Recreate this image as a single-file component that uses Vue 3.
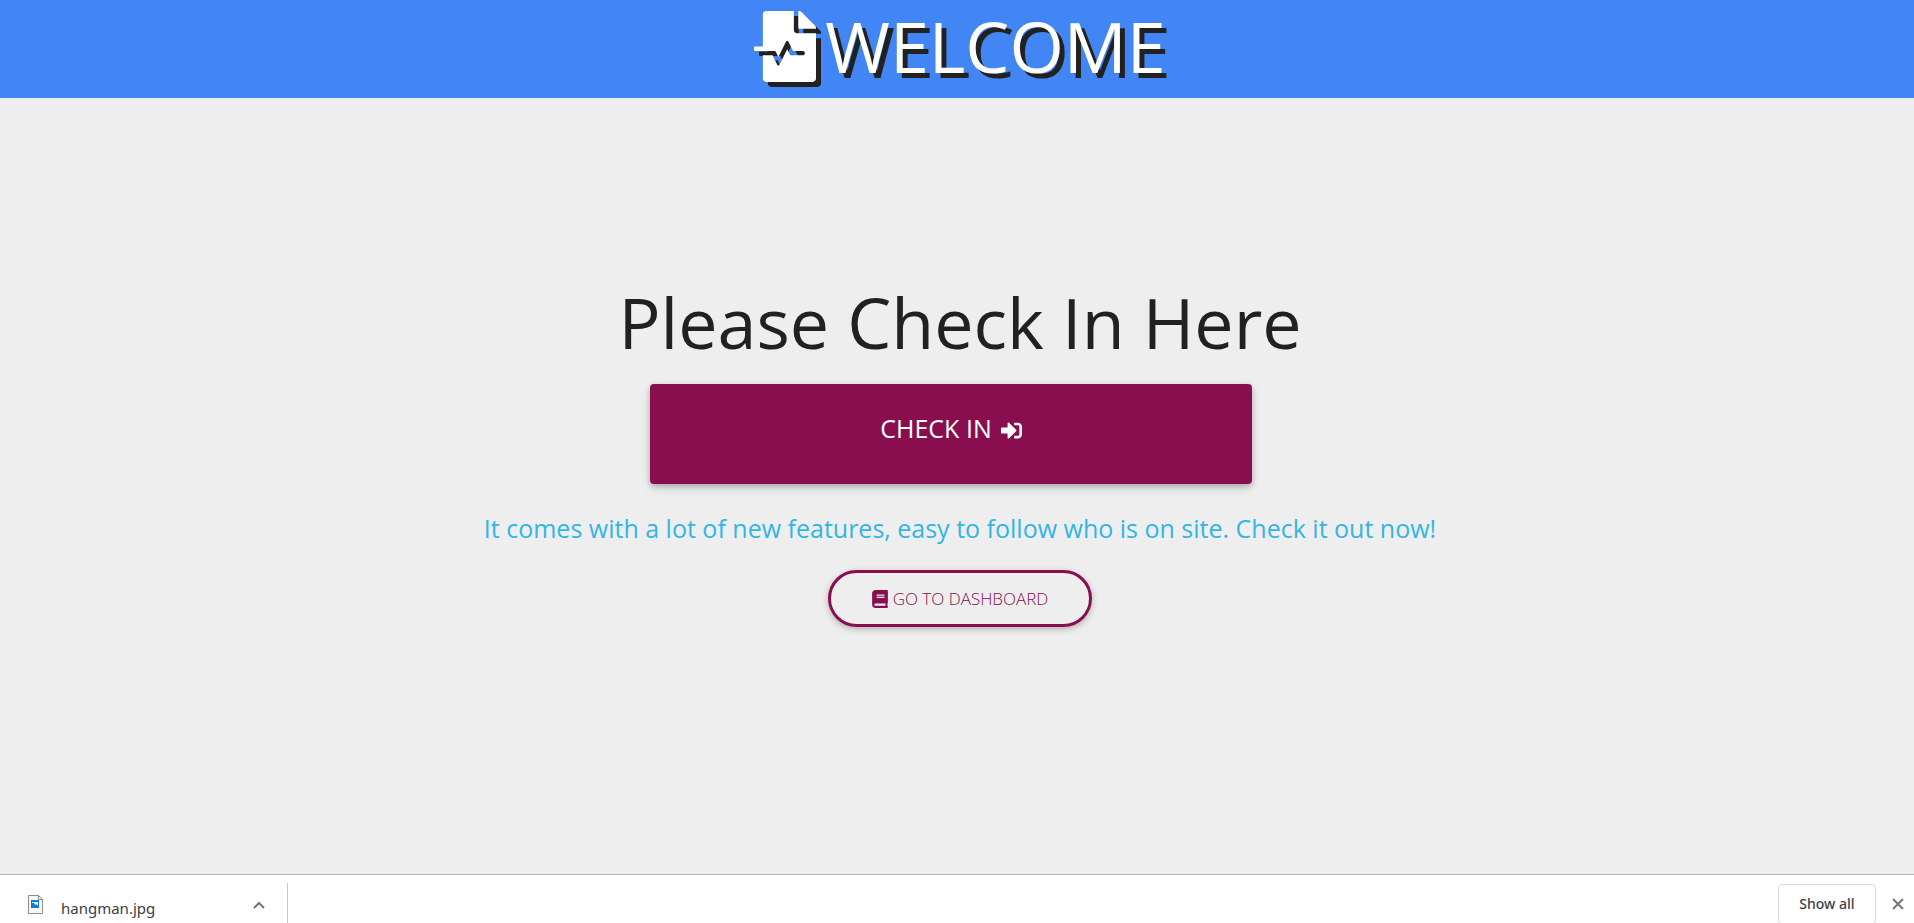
<script setup>
</script>

<template>
  <div class="page">
    <header class="banner">
      <h1 class="brand">
        <svg class="brand-icon" viewBox="0 0 448 512" aria-hidden="true">
          <path d="M288 136V0H88C74.700 0 64 10.700 64 24v232H8c-4.400 0-8 3.600-8 8v16c0 4.400 3.600 8 8 8h140.900c3 0 5.800 1.700 7.200 4.400l19.900 39.800 56.800-113.700c2.900-5.900 11.400-5.900 14.300 0l34.700 69.500H352c8.800 0 16 7.200 16 16s-7.200 16-16 16h-89.900L240 275.800l-56.800 113.700c-2.900 5.900-11.400 5.900-14.300 0L134.100 320H64v168c0 13.300 10.700 24 24 24h336c13.300 0 24-10.700 24-24V160H312c-13.200 0-24-10.800-24-24zm153-31L343.100 7c-4.500-4.500-10.600-7-17-7H320v128h128v-6.100c0-6.300-2.500-12.400-7-16.900z" />
        </svg>
        <span>WELCOME</span>
      </h1>
    </header>

    <main class="content">
      <h2 class="title">Please Check In Here</h2>
      <button class="check-in" type="button">
        <span>CHECK IN</span>
        <svg class="sign-icon" viewBox="0 0 512 512" aria-hidden="true">
          <path d="M416 448h-84c-6.600 0-12-5.400-12-12v-40c0-6.600 5.400-12 12-12h84c17.700 0 32-14.300 32-32V160c0-17.700-14.300-32-32-32h-84c-6.600 0-12-5.400-12-12V76c0-6.600 5.400-12 12-12h84c53 0 96 43 96 96v192c0 53-43 96-96 96zm-47-209L201 71c-15-15-41-4.500-41 17v96H24c-13.300 0-24 10.700-24 24v96c0 13.300 10.700 24 24 24h136v96c0 21.500 26 32 41 17l168-168c9.300-9.400 9.300-24.600 0-34z" />
        </svg>
      </button>
      <p class="lead">It comes with a lot of new features, easy to follow who is on site. Check it out now!</p>
      <a class="dashboard" href="#dashboard">
        <svg class="book-icon" viewBox="0 0 448 512" aria-hidden="true">
          <path d="M448 360V24c0-13.300-10.700-24-24-24H96C43 0 0 43 0 96v320c0 53 43 96 96 96h328c13.300 0 24-10.700 24-24v-16c0-7.500-3.500-14.300-8.900-18.700-4.200-15.400-4.200-59.300 0-74.700 5.400-4.300 8.900-11.100 8.900-18.600zM128 134c0-3.300 2.700-6 6-6h212c3.300 0 6 2.700 6 6v20c0 3.300-2.700 6-6 6H134c-3.300 0-6-2.700-6-6v-20zm0 64c0-3.300 2.700-6 6-6h212c3.300 0 6 2.700 6 6v20c0 3.300-2.700 6-6 6H134c-3.300 0-6-2.700-6-6v-20zm253.400 250H96c-17.700 0-32-14.300-32-32 0-17.600 14.400-32 32-32h285.400c-1.900 17.100-1.900 46.900 0 64z" />
        </svg>
        <span>GO TO DASHBOARD</span>
      </a>
    </main>

    <footer class="downloads">
      <div class="file">
        <svg class="file-icon" viewBox="0 0 15 19" aria-hidden="true">
          <path d="M.5.5H10.500L14.500 4.500V18.500H.5Z" fill="#f7f7f7" stroke="#8b8b8b" />
          <path d="M10.500.5V4.500H14.500" fill="none" stroke="#8b8b8b" />
          <path d="M3 5H11V13H3Z" fill="#0f7bdc" />
          <path d="M4 7H10V11L8 9L7 10L6 8H4Z" fill="#e6f4ff" />
        </svg>
        <span class="file-name">hangman.jpg</span>
        <button class="icon-button" type="button" aria-label="File options">
          <svg class="glyph" viewBox="0 0 12 12" aria-hidden="true"><path d="M1 9L6 4L11 9" /></svg>
        </button>
      </div>
      <div class="actions">
        <button class="show-all" type="button">Show all</button>
        <button class="icon-button" type="button" aria-label="Close">
          <svg class="glyph" viewBox="0 0 12 12" aria-hidden="true"><path d="M1 1L11 11M11 1L1 11" /></svg>
        </button>
      </div>
    </footer>
  </div>
</template>

<style>
body {
  margin: 0;
}
</style>

<style scoped>
.page {
  min-height: 100vh;
  display: flex;
  flex-direction: column;
  background: #eee;
  color: #212121;
  font-family: "Open Sans", sans-serif;
}
.banner {
  padding: 4px 0 10px 6px;
  background: #4285f4;
  color: #fff;
}
.brand {
  display: flex;
  justify-content: center;
  align-items: center;
  gap: 9px;
  margin: 0;
  font-size: 70px;
  line-height: 84px;
  font-weight: 400;
  text-shadow: 5px 5px #212121;
}
.brand-icon {
  width: 62px;
  height: 71px;
  overflow: visible;
  fill: #fff;
  filter: drop-shadow(5px 5px 0 #212121);
}
.content {
  flex: 1;
  display: flex;
  flex-direction: column;
  align-items: center;
  padding: 178px 0 0 6px;
}
.title {
  margin: 0 0 16px;
  font-size: 70px;
  line-height: 92px;
  font-weight: 400;
}
.check-in {
  display: flex;
  justify-content: center;
  gap: 9px;
  width: 602px;
  height: 100px;
  margin: 0 18px 0 0;
  padding: 26px 0 0;
  border: 0;
  border-radius: 4px;
  background: #880e4f;
  color: #fff;
  font: 400 25px/36px "Open Sans", sans-serif;
  box-shadow: 0 2px 5px rgba(0, 0, 0, 0.16), 0 4px 10px rgba(0, 0, 0, 0.16);
}
.sign-icon {
  width: 21px;
  height: 21px;
  margin-top: 10px;
  fill: currentColor;
}
.lead {
  margin: 26px 0 24px;
  color: #33b5e5;
  font-size: 25px;
  line-height: 36px;
  text-align: center;
}
.dashboard {
  display: flex;
  align-items: center;
  justify-content: center;
  gap: 5px;
  box-sizing: border-box;
  width: 264px;
  height: 57px;
  border: 3px solid #880e4f;
  border-radius: 32px;
  color: #880e4f;
  font-size: 17px;
  font-weight: 300;
  text-decoration: none;
  box-shadow: 0 2px 5px rgba(0, 0, 0, 0.16), 0 2px 10px rgba(0, 0, 0, 0.12);
}
.book-icon {
  width: 16px;
  height: 18px;
  fill: currentColor;
}
.downloads {
  display: flex;
  justify-content: space-between;
  height: 48px;
  overflow: hidden;
  border-top: 1px solid #b0b0b0;
  background: #fff;
  color: #3c4043;
  font-family: "Noto Sans", sans-serif;
}
.file {
  display: flex;
  box-sizing: border-box;
  width: 288px;
  height: 40px;
  margin-top: 8px;
  padding: 0 22px 0 28px;
  border-right: 1px solid #c8c8c8;
}
.file-icon {
  width: 15px;
  height: 19px;
  margin-top: 12px;
}
.file-name {
  flex: 1;
  margin: 13px 0 0 18px;
  font-size: 15px;
  line-height: 24px;
}
.icon-button {
  display: flex;
  align-items: center;
  height: 40px;
  padding: 0;
  border: 0;
  background: none;
}
.file .icon-button {
  padding-top: 4px;
}
.glyph {
  width: 12px;
  height: 12px;
  fill: none;
  stroke: #757575;
  stroke-width: 2;
}
.actions {
  display: flex;
  gap: 16px;
  padding: 9px 10px 0 0;
}
.show-all {
  width: 98px;
  height: 40px;
  padding: 0;
  border: 1px solid #d8dade;
  border-radius: 4px;
  background: #fff;
  color: #3c4043;
  font: 500 14px/20px "Noto Sans", sans-serif;
}
</style>
